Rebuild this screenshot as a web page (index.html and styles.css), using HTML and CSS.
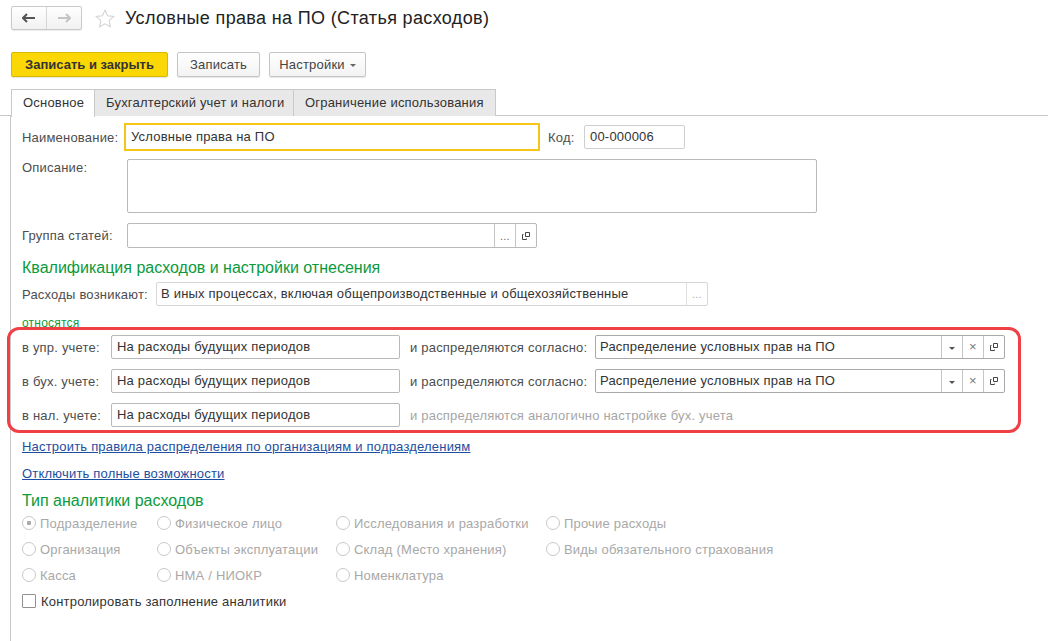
FILE: index.html
```html
<!DOCTYPE html>
<html lang="ru">
<head>
    <meta charset="UTF-8">
    <title>Условные права на ПО (Статья расходов)</title>
    <link rel="stylesheet" href="styles.css">
</head>
<body>
    <div class="header">
        <div class="nav">
            <span class="nav-btn">
                <svg width="14" height="10" viewBox="0 0 14 10"><path d="M1 5h12M5 1L1 5l4 4" fill="none" stroke="#555" stroke-width="2"/></svg>
            </span>
            <span class="nav-btn">
                <svg width="14" height="10" viewBox="0 0 14 10"><path d="M1 5h12M9 1l4 4-4 4" fill="none" stroke="#c4c4c4" stroke-width="2"/></svg>
            </span>
        </div>
        <svg class="star" width="20" height="19" viewBox="0 0 20 19"><path d="M10 1.2l2.6 5.6 6.1.7-4.5 4.2 1.2 6.1L10 14.8l-5.4 3 1.2-6.1L1.3 7.5l6.1-.7z" fill="none" stroke="#d4d4d4" stroke-width="1.1"/></svg>
        <h1 class="title">Условные права на ПО (Статья расходов)</h1>
    </div>

    <div class="toolbar">
        <button class="btn btn-primary">Записать и закрыть</button>
        <button class="btn btn-save">Записать</button>
        <button class="btn btn-menu">Настройки <span class="caret"></span></button>
    </div>

    <div class="tabs">
        <div class="tab active">Основное</div>
        <div class="tab">Бухгалтерский учет и налоги</div>
        <div class="tab">Ограничение использования</div>
    </div>

    <div class="panel">
        <div class="row row-name">
            <span class="label lbl-name">Наименование:</span>
            <div class="input input-focus input-name">Условные права на ПО</div>
            <span class="label lbl-code">Код:</span>
            <div class="input input-code">00-000006</div>
        </div>

        <div class="row row-desc">
            <span class="label lbl-desc">Описание:</span>
            <div class="input textarea"></div>
        </div>

        <div class="row row-group">
            <span class="label lbl-desc">Группа статей:</span>
            <div class="input field input-group">
                <span class="field-text"></span>
                <span class="field-btn">...</span>
                <span class="field-btn">
                    <svg width="10" height="10" viewBox="0 0 10 10"><path d="M4.5 1.5h4v4h-4zM2.5 3.5h-1v5h4v-1" fill="none" stroke="#444"/></svg>
                </span>
            </div>
        </div>

        <h2 class="section">Квалификация расходов и настройки отнесения</h2>

        <div class="row row-arise">
            <span class="label lbl-arise">Расходы возникают:</span>
            <div class="input field input-readonly">
                <span class="field-text">В иных процессах, включая общепроизводственные и общехозяйственные</span>
                <span class="field-btn btn-light">...</span>
            </div>
        </div>

        <div class="subhead">относятся</div>

        <div class="highlight">
            <div class="row row-acc">
                <span class="label lbl-acc">в упр. учете:</span>
                <div class="input input-acc">На расходы будущих периодов</div>
                <span class="label lbl-dist">и распределяются согласно:</span>
                <div class="input field input-combo">
                    <span class="field-text">Распределение условных прав на ПО</span>
                    <span class="field-btn"><span class="caret dark"></span></span>
                    <span class="field-btn cross">×</span>
                    <span class="field-btn">
                        <svg width="10" height="10" viewBox="0 0 10 10"><path d="M4.5 1.5h4v4h-4zM2.5 3.5h-1v5h4v-1" fill="none" stroke="#444"/></svg>
                    </span>
                </div>
            </div>
            <div class="row row-acc">
                <span class="label lbl-acc">в бух. учете:</span>
                <div class="input input-acc">На расходы будущих периодов</div>
                <span class="label lbl-dist">и распределяются согласно:</span>
                <div class="input field input-combo">
                    <span class="field-text">Распределение условных прав на ПО</span>
                    <span class="field-btn"><span class="caret dark"></span></span>
                    <span class="field-btn cross">×</span>
                    <span class="field-btn">
                        <svg width="10" height="10" viewBox="0 0 10 10"><path d="M4.5 1.5h4v4h-4zM2.5 3.5h-1v5h4v-1" fill="none" stroke="#444"/></svg>
                    </span>
                </div>
            </div>
            <div class="row row-acc">
                <span class="label lbl-acc">в нал. учете:</span>
                <div class="input input-acc">На расходы будущих периодов</div>
                <span class="label lbl-dist muted">и распределяются аналогично настройке бух. учета</span>
            </div>
        </div>

        <a class="link link-first" href="#">Настроить правила распределения по организациям и подразделениям</a>
        <a class="link link-second" href="#">Отключить полные возможности</a>

        <h2 class="section section-type">Тип аналитики расходов</h2>

        <div class="radios">
            <span class="radio checked">Подразделение</span>
            <span class="radio">Физическое лицо</span>
            <span class="radio">Исследования и разработки</span>
            <span class="radio">Прочие расходы</span>
            <span class="radio">Организация</span>
            <span class="radio">Объекты эксплуатации</span>
            <span class="radio">Склад (Место хранения)</span>
            <span class="radio">Виды обязательного страхования</span>
            <span class="radio">Касса</span>
            <span class="radio">НМА / НИОКР</span>
            <span class="radio">Номенклатура</span>
        </div>

        <label class="checkbox"><span class="box"></span>Контролировать заполнение аналитики</label>
    </div>
</body>
</html>
```

FILE: styles.css
```css
* {
    margin: 0;
    padding: 0;
    box-sizing: border-box;
}

body {
    font-family: 'Liberation Sans', Arial, sans-serif;
    font-size: 13px;
    letter-spacing: 0.2px;
    color: #4d4d4d;
    background-color: #fff;
    width: 1048px;
    height: 641px;
    overflow: hidden;
}

/* Header */
.header {
    display: flex;
    align-items: center;
    padding: 6px 11px 0;
    height: 30px;
}

.nav {
    display: flex;
    width: 71px;
    height: 24px;
    border: 1px solid #c9c9c9;
    border-radius: 2px;
    background: linear-gradient(#fff, #f1f1f1);
    box-shadow: 0 1px 1px rgba(0, 0, 0, 0.08);
}

.nav-btn {
    flex: 1;
    display: flex;
    align-items: center;
    justify-content: center;
}

.nav-btn + .nav-btn {
    border-left: 1px solid #d6d6d6;
}

.star {
    margin-left: 13px;
}

.title {
    margin-left: 10px;
    font-size: 18px;
    letter-spacing: 0.35px;
    font-weight: normal;
    color: #222;
}

/* Toolbar */
.toolbar {
    display: flex;
    gap: 9px;
    padding: 22px 11px 0;
}

.btn {
    height: 25px;
    padding: 0 8px;
    font-family: inherit;
    font-size: 13px;
    letter-spacing: 0.2px;
    white-space: nowrap;
    color: #444;
    background: linear-gradient(#fff, #f3f3f3);
    border: 1px solid #c5c5c5;
    border-radius: 2px;
    box-shadow: 0 1px 1px rgba(0, 0, 0, 0.1);
}

.btn-primary {
    width: 157px;
    font-weight: bold;
    letter-spacing: 0;
    color: #333;
    background: #fbd705;
    border-color: #d9b800;
}

.btn-save {
    width: 83px;
}

.btn-menu {
    width: 97px;
    display: flex;
    align-items: center;
    justify-content: center;
    gap: 5px;
}

.caret {
    display: inline-block;
    width: 0;
    height: 0;
    border-left: 3px solid transparent;
    border-right: 3px solid transparent;
    border-top: 3px solid #666;
    margin-top: 2px;
}

.caret.dark {
    border-top-color: #555;
}

/* Tabs */
.tabs {
    display: flex;
    padding: 12px 0 0 11px;
    height: 39px;
    border-bottom: 1px solid #c9c9c9;
}

.tab {
    height: 27px;
    padding: 0 11px;
    line-height: 26px;
    color: #333;
    background: #e8e8e8;
    border: 1px solid #c9c9c9;
    border-left: none;
    border-bottom: none;
    white-space: nowrap;
}

.tab.active {
    width: 84px;
    background: #fff;
    border-left: 1px solid #c9c9c9;
    height: 28px;
    margin-bottom: -1px;
}

.tab:nth-child(2) {
    width: 199px;
}

.tab:nth-child(3) {
    width: 202px;
}

/* Panel */
.panel {
    display: flex;
    flex-direction: column;
    align-items: flex-start;
    margin-left: 10px;
    padding: 7px 0 0 11px;
    border-left: 1px solid #c9c9c9;
    height: 525px;
}

.row {
    display: flex;
    align-items: center;
}

.label {
    flex-shrink: 0;
    white-space: nowrap;
}

.lbl-name { width: 102px; }
.lbl-code { width: 36px; margin-left: 8px; }
.lbl-desc { width: 105px; }
.lbl-arise { width: 134px; }
.lbl-acc { width: 89px; }
.lbl-dist { width: 185px; margin-left: 10px; }

.muted {
    color: #a6a6a6;
    width: auto;
}

.input {
    height: 24px;
    padding: 0 5px;
    line-height: 22px;
    color: #333;
    background: #fff;
    border: 1px solid #b9b9b9;
    border-radius: 2px;
    white-space: nowrap;
}

.input-focus {
    height: 28px;
    line-height: 24px;
    border: 2px solid #f5c518;
    border-radius: 0;
}

.input-name { width: 416px; }
.input-code { width: 101px; border-color: #cfcfcf; }

.row-desc {
    align-items: flex-start;
    margin-top: 8px;
}

.row-desc .label {
    padding-top: 1px;
}

.textarea {
    width: 690px;
    height: 54px;
}

.row-group {
    margin-top: 10px;
}

.field {
    display: flex;
    padding: 0;
}

.field-text {
    flex: 1;
    padding: 0 4px;
    overflow: hidden;
}

.field-btn {
    width: 21px;
    display: flex;
    align-items: center;
    justify-content: center;
    border-left: 1px solid #c6c6c6;
    color: #666;
    font-size: 11px;
}

.input-group {
    width: 410px;
    height: 25px;
}

.section {
    margin-top: 10px;
    font-size: 16px;
    font-weight: normal;
    letter-spacing: 0;
    line-height: 20px;
    color: #0b9a3c;
}

.row-arise {
    margin-top: 4px;
}

.input-readonly {
    width: 552px;
    border-color: #d6d6d6;
}

.btn-light {
    color: #aaa;
    border-left-color: #e0e0e0;
}

.subhead {
    margin-top: 10px;
    font-size: 12px;
    line-height: 14px;
    color: #0b9a3c;
}

/* Highlighted block */
.highlight {
    display: flex;
    flex-direction: column;
    gap: 10px;
    width: 1014px;
    margin: -3px 0 0 -15px;
    padding: 5px 0 3px 12px;
    border: 3px solid #f04046;
    border-radius: 12px;
}

.input-acc { width: 289px; }

.input-combo {
    width: 410px;
    border-color: #a9a9a9;
}

.cross {
    font-size: 13px;
    color: #777;
}

/* Links */
.link {
    color: #1d4ea0;
    line-height: 16px;
}

.link-first { margin-top: 6px; }
.link-second { margin-top: 11px; }

.section-type {
    margin-top: 9px;
}

/* Radios */
.radios {
    display: grid;
    grid-template-columns: 135px 179px 210px auto;
    grid-auto-rows: 26px;
    margin-top: -1px;
}

.radio {
    display: flex;
    align-items: center;
    gap: 4px;
    color: #a8a8a8;
    white-space: nowrap;
}

.radio::before {
    content: "";
    width: 14px;
    height: 14px;
    border: 1px solid #c8c8c8;
    border-radius: 50%;
    background: #fff;
    box-sizing: border-box;
}

.radio.checked::before {
    background: radial-gradient(circle, #aaa 0 2px, #fff 2.5px);
}

.checkbox {
    display: flex;
    align-items: center;
    gap: 5px;
    height: 26px;
    color: #333;
}

.box {
    width: 14px;
    height: 14px;
    border: 1px solid #909090;
    border-radius: 1px;
}
```
